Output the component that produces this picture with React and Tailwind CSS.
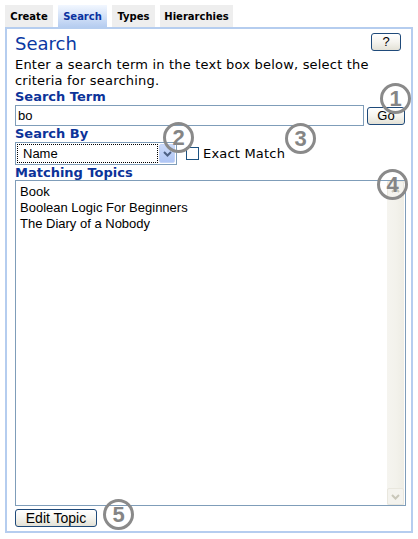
import React from "react";

const V = { fontFamily: '"DejaVu Sans", Verdana, sans-serif' };
const T = { fontFamily: '"Liberation Sans", Arial, sans-serif' };

function Circle({ n, className }) {
  return (
    <div
      className={
        "absolute w-[31px] h-[31px] rounded-full border-[3px] border-[#8a8a8a] flex items-center justify-center text-[22px] font-bold text-[#858585] leading-none " +
        className
      }
      style={T}
    >
      {n}
    </div>
  );
}

function XPButton({ children, className }) {
  return (
    <div
      className={
        "flex items-center justify-center border border-[#1f4a7a] rounded-[3px] bg-gradient-to-b from-white via-[#f5f4ef] to-[#e3e1d6] text-[13px] text-black " +
        className
      }
      style={T}
    >
      {children}
    </div>
  );
}

export default function App() {
  return (
    <div className="relative w-[418px] h-[539px] bg-white overflow-hidden">
      {/* Tabs */}
      <div className="flex gap-[5px] pl-[5px] pt-[5px] h-[27px]" style={V}>
        <div className="w-[48px] h-[22px] bg-[#eeeeee] flex items-center justify-center text-[10px] font-bold text-black">
          Create
        </div>
        <div className="w-[49px] h-[22px] bg-gradient-to-b from-[#f2f7ff] to-[#b6cdf0] flex items-center justify-center text-[10px] font-bold text-[#0a32a0]">
          Search
        </div>
        <div className="w-[43px] h-[22px] bg-[#eeeeee] flex items-center justify-center text-[10px] font-bold text-black">
          Types
        </div>
        <div className="w-[73px] h-[22px] bg-[#eeeeee] flex items-center justify-center text-[10px] font-bold text-black">
          Hierarchies
        </div>
      </div>

      {/* Panel */}
      <div className="ml-[5px] w-[408px] h-[506px] border-2 border-[#b5cdef] pl-[8px] flex flex-col">
        <div className="mt-[4px] h-[22px] flex justify-between items-start">
          <div className="text-[18px] leading-[22px] text-[#0a38a3]" style={V}>
            Search
          </div>
          <XPButton className="w-[30px] h-[18px] mr-[10px]">?</XPButton>
        </div>
        <div className="mt-[2px] text-[13px] leading-[16px] tracking-[0.2px] text-black" style={V}>
          Enter a search term in the text box below, select the
          <br />
          criteria for searching.
        </div>
        <div className="text-[13px] leading-[16px] font-bold text-[#0c3399]" style={V}>
          Search Term
        </div>
        <div className="flex items-start h-[21px]">
          <div
            className="w-[349px] h-[21px] border border-[#7f9db9] flex items-center pl-[2px] text-[13px] text-black"
            style={T}
          >
            bo
          </div>
          <XPButton className="ml-[3px] mt-[2px] w-[38px] h-[18px]">Go</XPButton>
        </div>
        <div className="text-[13px] leading-[16px] font-bold text-[#0c3399]" style={V}>
          Search By
        </div>
        <div className="flex items-center h-[23px]">
          <div className="w-[162px] h-[23px] border border-[#7f9db9] flex items-center p-[1px]">
            <div
              className="flex-1 h-[19px] border border-dotted border-black flex items-center pl-[5px] text-[13px] text-black"
              style={T}
            >
              Name
            </div>
            <div className="w-[16px] h-[19px] ml-[1px] rounded-[2px] bg-gradient-to-b from-[#cbdaf9] to-[#b0c6f5] border border-[#c4d4f7] flex items-center justify-center">
              <svg width="9" height="6" viewBox="0 0 9 6">
                <path d="M1 1 L4.5 4.5 L8 1" stroke="#4d6185" strokeWidth="2" fill="none" />
              </svg>
            </div>
          </div>
          <div className="ml-[9px] w-[13px] h-[13px] border border-[#1c5180] bg-white" />
          <div className="ml-[4px] text-[13px] tracking-[0.2px] text-black" style={V}>
            Exact Match
          </div>
        </div>
        <div className="text-[13px] leading-[15px] font-bold text-[#0c3399]" style={V}>
          Matching Topics
        </div>
        <div className="w-[391px] h-[326px] border border-[#7f9db9] flex">
          <div className="flex-1 pl-[4px] pt-[3px] text-[13px] leading-[16px] text-black" style={T}>
            <div>Book</div>
            <div>Boolean Logic For Beginners</div>
            <div>The Diary of a Nobody</div>
          </div>
          <div className="w-[17px] mr-[1px] flex flex-col bg-gradient-to-r from-[#f5f4ef] via-[#f3f2ec] to-[#eeede5]">
            <div className="h-[17px] border border-[#e9e7de] rounded-[2px] bg-[#f4f3ee] flex items-center justify-center">
              <svg width="9" height="6" viewBox="0 0 9 6">
                <path d="M1 5 L4.5 1.5 L8 5" stroke="#c9c7ba" strokeWidth="2" fill="none" />
              </svg>
            </div>
            <div className="flex-1" />
            <div className="h-[17px] border border-[#e9e7de] rounded-[2px] bg-[#f4f3ee] flex items-center justify-center">
              <svg width="9" height="6" viewBox="0 0 9 6">
                <path d="M1 1 L4.5 4.5 L8 1" stroke="#c9c7ba" strokeWidth="2" fill="none" />
              </svg>
            </div>
          </div>
        </div>
        <XPButton className="mt-[3px] w-[82px] h-[18px] text-[14px]">Edit Topic</XPButton>
      </div>

      <Circle n="1" className="left-[380px] top-[83px]" />
      <Circle n="2" className="left-[163px] top-[122px]" />
      <Circle n="3" className="left-[285px] top-[123px]" />
      <Circle n="4" className="left-[377px] top-[169px]" />
      <Circle n="5" className="left-[103px] top-[499px]" />
    </div>
  );
}
